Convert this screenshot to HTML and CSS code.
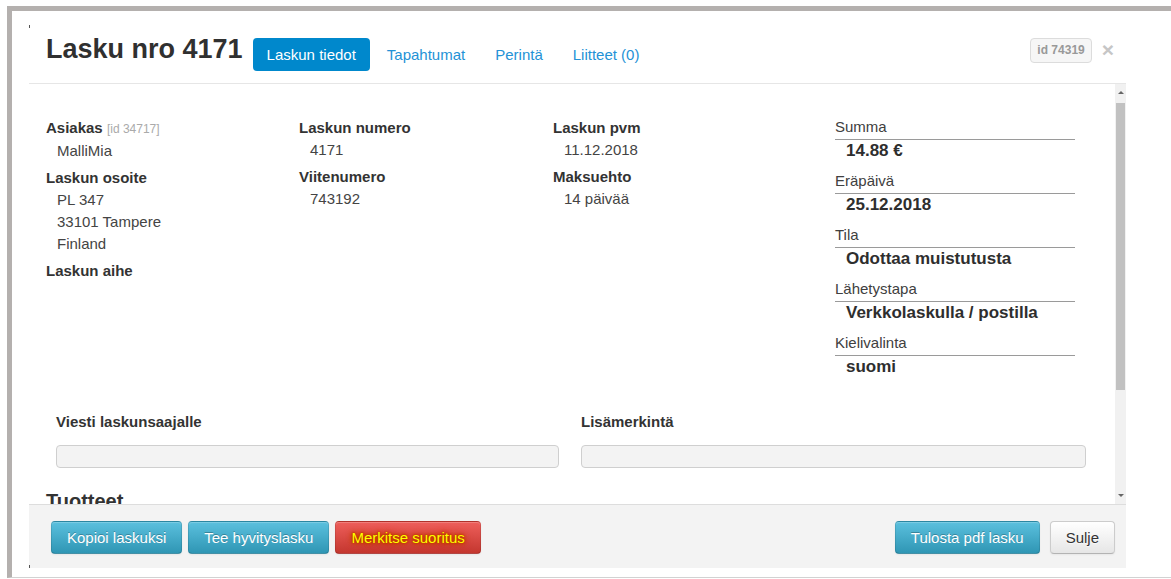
FILE: index.html
```html
<!DOCTYPE html>
<html lang="fi">
<head>
<meta charset="utf-8">
<title>Lasku nro 4171</title>
<link rel="stylesheet" href="styles.css">
</head>
<body>
<div class="screen">
  <div class="frame">
    <div class="modal">
      <header class="modal-head">
        <h1 class="title">Lasku nro 4171</h1>
        <nav class="tabs">
          <a class="tab active">Laskun tiedot</a>
          <a class="tab">Tapahtumat</a>
          <a class="tab">Perintä</a>
          <a class="tab">Liitteet (0)</a>
        </nav>
        <div class="head-tools">
          <span class="id-badge">id 74319</span>
          <span class="close">×</span>
        </div>
      </header>

      <div class="modal-body">
        <div class="scroll-pane">
          <div class="info-grid">
            <dl class="field-col">
              <dt>Asiakas <span class="ref-id">[id 34717]</span></dt>
              <dd>MalliMia</dd>
              <dt>Laskun osoite</dt>
              <dd>PL 347<br>33101 Tampere<br>Finland</dd>
              <dt>Laskun aihe</dt>
              <dd></dd>
            </dl>
            <dl class="field-col">
              <dt>Laskun numero</dt>
              <dd>4171</dd>
              <dt>Viitenumero</dt>
              <dd>743192</dd>
            </dl>
            <dl class="field-col">
              <dt>Laskun pvm</dt>
              <dd>11.12.2018</dd>
              <dt>Maksuehto</dt>
              <dd>14 päivää</dd>
            </dl>
            <dl class="summary">
              <dt>Summa</dt>
              <dd>14.88 €</dd>
              <dt>Eräpäivä</dt>
              <dd>25.12.2018</dd>
              <dt>Tila</dt>
              <dd>Odottaa muistutusta</dd>
              <dt>Lähetystapa</dt>
              <dd>Verkkolaskulla / postilla</dd>
              <dt>Kielivalinta</dt>
              <dd>suomi</dd>
            </dl>
          </div>

          <div class="notes">
            <label class="note">
              <span class="note-label">Viesti laskunsaajalle</span>
              <input class="note-input" type="text" disabled>
            </label>
            <label class="note">
              <span class="note-label">Lisämerkintä</span>
              <input class="note-input" type="text" disabled>
            </label>
          </div>

          <h2 class="section-title">Tuotteet</h2>
        </div>

        <div class="scrollbar">
          <div class="sb-btn"><span class="arrow-up"></span></div>
          <div class="sb-thumb"></div>
          <div class="sb-track"></div>
          <div class="sb-btn"><span class="arrow-down"></span></div>
        </div>
      </div>

      <footer class="modal-foot">
        <div class="btn-group">
          <button class="btn btn-info">Kopioi laskuksi</button>
          <button class="btn btn-info">Tee hyvityslasku</button>
          <button class="btn btn-danger">Merkitse suoritus</button>
        </div>
        <div class="btn-group btn-group-right">
          <button class="btn btn-info">Tulosta pdf lasku</button>
          <button class="btn btn-default">Sulje</button>
        </div>
      </footer>
    </div>
  </div>
</div>
</body>
</html>
```

FILE: styles.css
```css
* {
  box-sizing: border-box;
}

html, body {
  margin: 0;
  background: #ffffff;
}

body {
  font-family: "Liberation Sans", Arial, sans-serif;
  font-size: 15px;
  color: #333333;
  width: 1171px;
  height: 579px;
  overflow: hidden;
}

/* outer window frame */
.screen {
  padding: 6px 0 0 7px;
}

.frame {
  height: 572px;
  border-top: 5px solid #b4b0ae;
  border-left: 5px solid #b4b0ae;
  border-bottom: 1px solid #d2d2d2;
  padding: 15px 45px 0 17px;
}

/* dialog */
.modal {
  position: relative;
  height: 542px;
  display: flex;
  flex-direction: column;
  background: #ffffff;
}

.modal::before,
.modal::after {
  content: "";
  position: absolute;
  left: 0;
  width: 1px;
  height: 3px;
  background: #555555;
}

.modal::before {
  top: -1px;
}

.modal::after {
  bottom: 0;
}

/* header */
.modal-head {
  height: 58px;
  display: flex;
  align-items: flex-start;
  padding: 12px 11px 0 17px;
  border-bottom: 1px solid #e6e6e6;
}

.title {
  margin: -2px 10px 0 0;
  font-size: 27px;
  line-height: 27px;
  font-weight: bold;
  color: #303030;
  white-space: nowrap;
}

.tabs {
  display: flex;
  gap: 4px;
}

.tab {
  display: block;
  height: 33px;
  line-height: 33px;
  padding: 0 13px;
  font-size: 15px;
  color: #2492d6;
  border-radius: 4px;
  white-space: nowrap;
}

.tab.active {
  padding: 0 14px;
  background: #0088cc;
  color: #ffffff;
}

.head-tools {
  margin-left: auto;
  display: flex;
  align-items: flex-start;
  gap: 10px;
}

.id-badge {
  display: block;
  height: 25px;
  line-height: 23px;
  padding: 0 6px;
  font-size: 12px;
  font-weight: bold;
  color: #999999;
  background: #f6f6f6;
  border: 1px solid #dcdcdc;
  border-radius: 4px;
}

.close {
  display: block;
  margin-right: 1px;
  line-height: 23px;
  font-size: 21px;
  font-weight: bold;
  color: #c6c6c6;
}

/* body with scroll area */
.modal-body {
  height: 420px;
  display: flex;
}

.scroll-pane {
  flex: 1;
  overflow: hidden;
  padding: 33px 0 0 17px;
}

.info-grid {
  display: grid;
  grid-template-columns: 253px 254px 282px 240px;
}

.field-col {
  margin: 0;
}

.field-col dt {
  font-weight: bold;
  line-height: 22px;
  color: #333333;
}

.field-col dd {
  margin: 0 0 5px 0;
  padding-left: 11px;
  line-height: 22px;
  color: #444444;
}

.ref-id {
  font-weight: normal;
  font-size: 12px;
  color: #aaaaaa;
}

.summary {
  margin: 0;
}

.summary dt {
  line-height: 20px;
  padding-bottom: 2px;
  border-bottom: 1px solid #9a9a9a;
  color: #404040;
}

.summary dd {
  margin: 0 0 9px 0;
  padding-left: 11px;
  font-size: 17px;
  font-weight: bold;
  line-height: 22px;
  color: #2e2e2e;
  white-space: nowrap;
}

.notes {
  display: grid;
  grid-template-columns: 503px 505px;
  column-gap: 22px;
  margin: 24px 0 0 10px;
}

.note {
  display: flex;
  flex-direction: column;
}

.note-label {
  font-weight: bold;
  line-height: 22px;
  color: #333333;
}

.note-input {
  margin: 12px 0 0 0;
  height: 23px;
  background: #f3f3f3;
  border: 1px solid #cfcfcf;
  border-radius: 4px;
}

.section-title {
  margin: 21px 0 0 0;
  font-size: 20px;
  line-height: 24px;
  font-weight: bold;
  color: #333333;
}

/* scrollbar column */
.scrollbar {
  width: 11px;
  display: flex;
  flex-direction: column;
  background: #f1f1f1;
}

.sb-btn {
  height: 17px;
  display: flex;
  align-items: center;
  justify-content: center;
}

.arrow-up {
  width: 0;
  height: 0;
  border-left: 3px solid transparent;
  border-right: 3px solid transparent;
  border-bottom: 3px solid #666666;
}

.arrow-down {
  width: 0;
  height: 0;
  border-left: 3px solid transparent;
  border-right: 3px solid transparent;
  border-top: 3px solid #666666;
}

.sb-thumb {
  margin: 2px 1px 0 1px;
  height: 287px;
  background: #c1c1c1;
}

.sb-track {
  flex: 1;
}

/* footer */
.modal-foot {
  height: 64px;
  display: flex;
  align-items: flex-start;
  padding: 16px 11px 0 22px;
  background: #f3f3f3;
  border-top: 1px solid #dddddd;
}

.btn-group {
  display: flex;
  gap: 6px;
}

.btn-group-right {
  margin-left: auto;
  gap: 10px;
}

.btn {
  height: 33px;
  padding: 0 15px;
  font-family: "Liberation Sans", Arial, sans-serif;
  font-size: 15px;
  line-height: 31px;
  border-radius: 4px;
  border: 1px solid rgba(0, 0, 0, 0.12);
  white-space: nowrap;
  box-shadow: inset 0 1px 0 rgba(255, 255, 255, 0.2), 0 1px 2px rgba(0, 0, 0, 0.05);
}

.btn-info {
  color: #ffffff;
  text-shadow: 0 -1px 0 rgba(0, 0, 0, 0.25);
  background: linear-gradient(#5bc0de, #2f96b4);
  border-color: rgba(0, 0, 0, 0.1) rgba(0, 0, 0, 0.1) rgba(0, 0, 0, 0.25);
}

.btn-danger {
  color: #ffff00;
  text-shadow: 0 0 1px #b83000, 0 0 2px #c43a00, 0 0 3px #c43a00, 0 0 4px #c84000, 0 0 6px #c84000, 0 0 8px #c84000;
  background: linear-gradient(#ee5f5b, #c4372f);
  border-color: rgba(0, 0, 0, 0.1) rgba(0, 0, 0, 0.1) rgba(0, 0, 0, 0.25);
}

.btn-default {
  color: #333333;
  text-shadow: 0 1px 1px rgba(255, 255, 255, 0.75);
  background: linear-gradient(#ffffff, #e6e6e6);
  border-color: #cccccc #cccccc #b3b3b3;
}
```
